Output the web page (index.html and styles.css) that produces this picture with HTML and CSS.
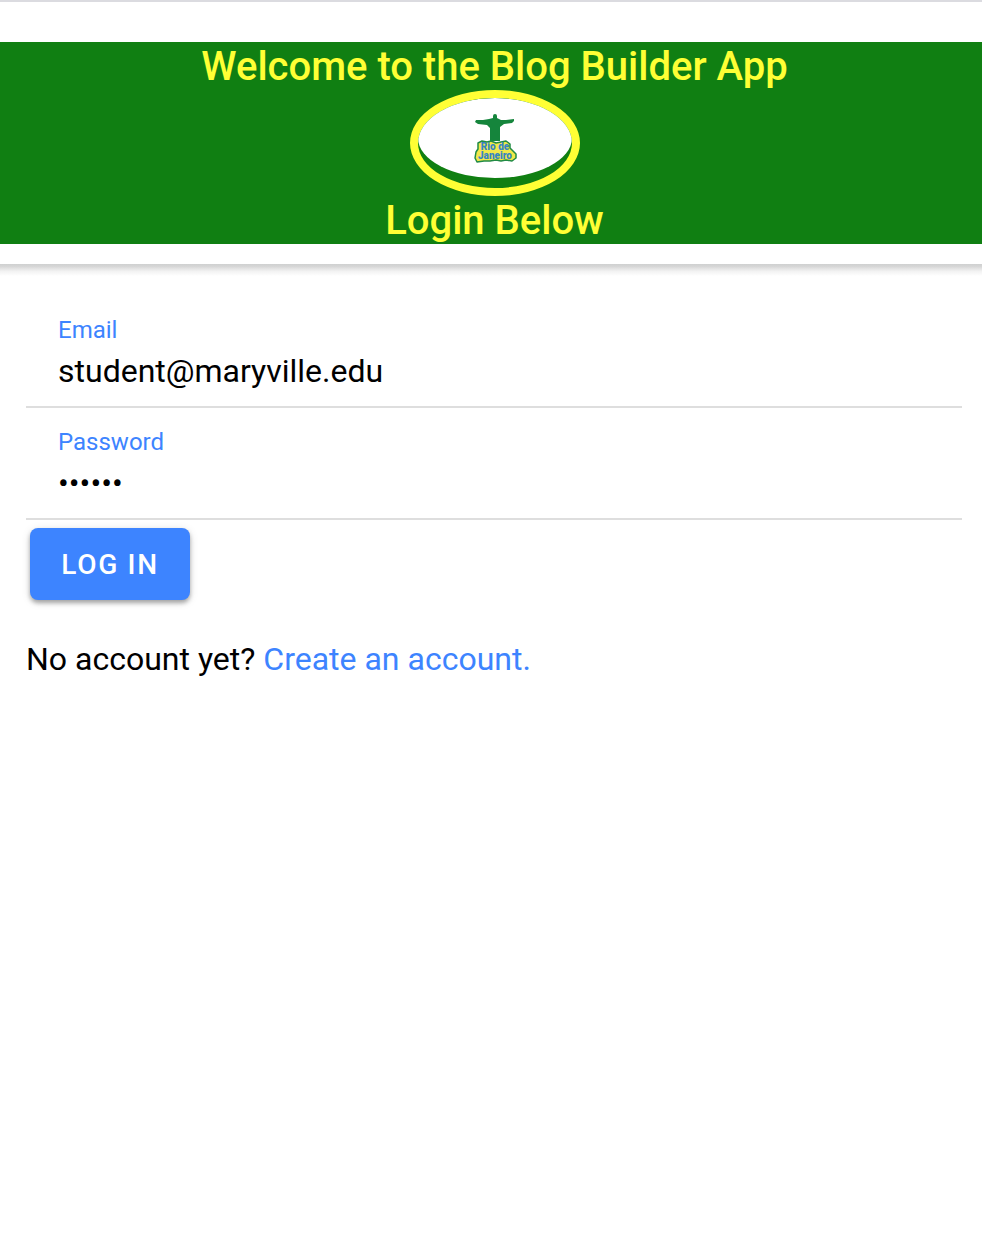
FILE: index.html
```html
<!DOCTYPE html>
<html lang="en">
<head>
<meta charset="utf-8">
<meta name="viewport" content="width=device-width, initial-scale=1">
<title>Blog Builder Login</title>
<link rel="stylesheet" href="styles.css">
</head>
<body>
<header class="header">
  <div class="banner">
    <h1 class="title">Welcome to the Blog Builder App</h1>
    <div class="logo">
      <svg class="logo-image" viewBox="0 0 154 80" role="img" aria-label="Rio de Janeiro">
        <rect width="154" height="80" fill="#fff"/>
        <path fill="#15853c" d="M75 20v-2q0-2 2-2t2 2v2l4 2 5 0 8-1 0 2-2 2-8 1-4 3v14h-10V30l-3-3-9-1-3-2 1-2 7 0 6-1z"/>
        <path fill="#f1e84a" stroke="#218b45" stroke-width="1.5" stroke-linejoin="round" d="M60 45l4-2 5 1 4-1 5 2 5-1 5-1 4 3v4l3 3 3 3v4l-4 3-6-1-5 1-5-1-6 1h-6l-7 1-2-4 1-6 2-3z"/>
        <text class="logo-text" x="77" y="52" text-anchor="middle">Rio de</text>
        <text class="logo-text" x="77" y="61" text-anchor="middle">Janeiro</text>
      </svg>
    </div>
    <h2 class="title">Login Below</h2>
  </div>
</header>
<main class="content">
  <form>
    <div class="field">
      <label class="label" for="email">Email</label>
      <input class="input" id="email" type="email" value="student@maryville.edu">
    </div>
    <div class="field">
      <label class="label" for="password">Password</label>
      <input class="input" id="password" type="password" value="secret">
    </div>
    <button class="button" type="button">LOG IN</button>
  </form>
  <p class="signup">No account yet? <a class="link" href="#create">Create an account.</a></p>
</main>
</body>
</html>
```
FILE: styles.css
```css
* {
  box-sizing: border-box;
}

body {
  margin: 0;
  background: #fff;
  color: #000;
  font-family: Roboto, "Liberation Sans", sans-serif;
  font-size: 32px;
}

.header {
  padding-top: 40px;
  border-top: 2px solid #dbdbe0;
}

.header::after {
  content: "";
  display: block;
  height: 12px;
  margin-top: 20px;
  background: linear-gradient(#cfd0d0 0, #d6d6d6 20%, #f2f2f2 60%, #fff 100%);
}

.banner {
  display: flex;
  flex-direction: column;
  align-items: center;
  padding-left: 7px;
  background: #107f12;
  color: #ffff35;
}

.title {
  margin: 0;
  padding-top: 2px;
  font-size: 40px;
  font-weight: 500;
  line-height: 46px;
}

.logo {
  width: 170px;
  padding-bottom: 10px;
  border: 8px solid #ffff35;
  border-radius: 50%;
  overflow: hidden;
}

.logo-image {
  display: block;
  width: 100%;
  border-radius: 50%;
}

.logo-text {
  fill: #3585c2;
  font-size: 10px;
  font-weight: 900;
}

.content {
  padding: 20px 20px 32px 26px;
}

.field {
  display: flex;
  flex-direction: column;
  padding: 18px 32px 10px;
  border-bottom: 2px solid #dedede;
}

.label {
  color: #3d84ff;
  font-size: 24px;
  line-height: 32px;
}

.input {
  width: 100%;
  height: 50px;
  padding: 0;
  border: 0;
  outline: 0;
  background: transparent;
  color: inherit;
  font: inherit;
}

.button {
  display: block;
  height: 72px;
  min-width: 160px;
  margin: 8px 4px;
  padding: 2px 31px 0;
  border: 0;
  border-radius: 8px;
  background: #3d84ff;
  box-shadow: 0 3px 4px rgba(0, 0, 0, 0.3), 0 2px 10px rgba(0, 0, 0, 0.12);
  color: #fff;
  font: 500 28px/70px Roboto, "Liberation Sans", sans-serif;
  letter-spacing: 0.06em;
}

.signup {
  margin: 40px 0;
  line-height: 38px;
}

.link {
  color: #3d84ff;
  text-decoration: none;
}
```
